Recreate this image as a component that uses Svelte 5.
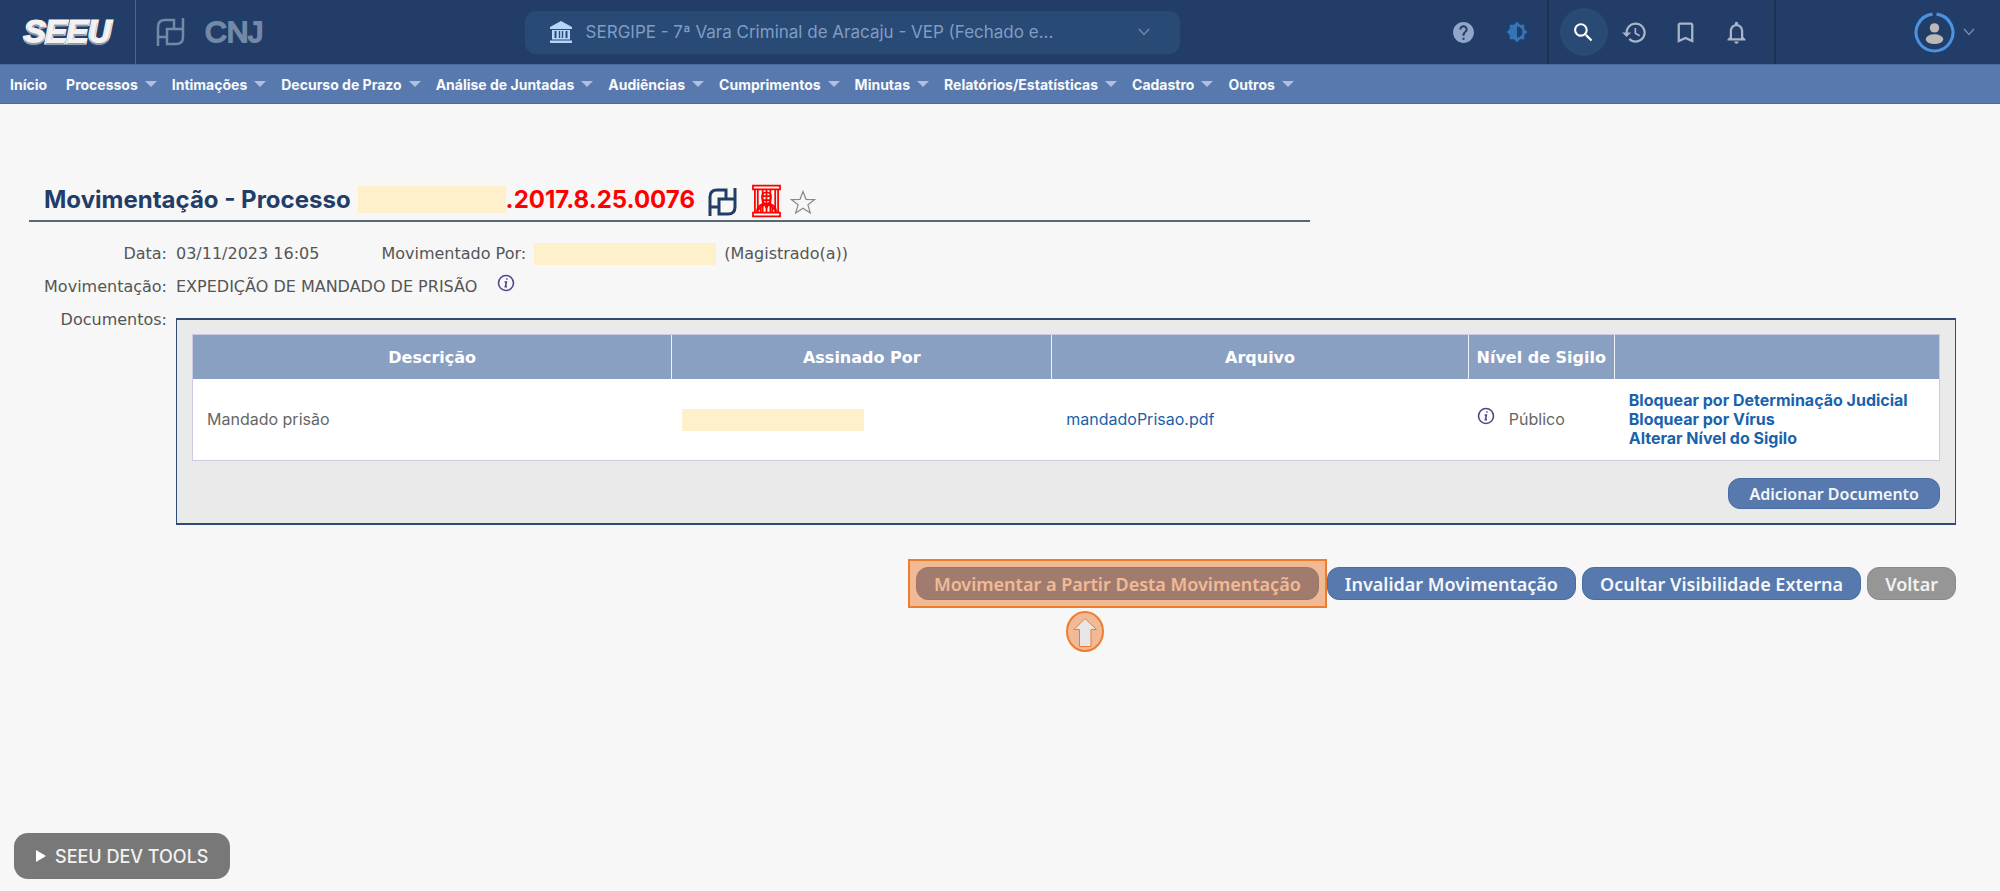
<script>
  const menu = [
    { label: 'Início', sub: false },
    { label: 'Processos', sub: true },
    { label: 'Intimações', sub: true },
    { label: 'Decurso de Prazo', sub: true },
    { label: 'Análise de Juntadas', sub: true },
    { label: 'Audiências', sub: true },
    { label: 'Cumprimentos', sub: true },
    { label: 'Minutas', sub: true },
    { label: 'Relatórios/Estatísticas', sub: true },
    { label: 'Cadastro', sub: true },
    { label: 'Outros', sub: true }
  ];

  const acoes = [
    'Bloquear por Determinação Judicial',
    'Bloquear por Vírus',
    'Alterar Nível do Sigilo'
  ];
</script>

{#snippet pdpj()}
  <svg class="pdpj" viewBox="0 0 29 28" aria-hidden="true">
    <path d="M2 28V9Q2 2 9 2H18V10M27 0V19Q27 26 20 26H11V11H27M2 19H11" />
  </svg>
{/snippet}

{#snippet info()}
  <svg class="info" viewBox="0 0 18 18" aria-hidden="true">
    <circle cx="9" cy="9" r="7.5" />
    <path d="M10 4.4L9.8 5.6M7.6 8H9.4L8.4 12.6H10" />
  </svg>
{/snippet}

<div class="page">
  <header class="topbar">
    <div class="brand">
      <a href="#inicio" class="seeu">SEEU</a>
      <a href="#pdpj" class="cnj" aria-label="CNJ">
        {@render pdpj()}
        <span>CNJ</span>
      </a>
    </div>

    <label class="vara">
      <svg class="bank" viewBox="0 0 22 22" aria-hidden="true">
        <path d="M11 0L22 6V8H0V6ZM2 9H20V17H17.5V10H15.5V17H13.2V10H11.8V17H10.2V10H8.8V17H6.5V10H4.5V17H2ZM2 17H20V18.5H2ZM0 19.5H22V22H0Z" />
      </svg>
      <select aria-label="Vara">
        <option>SERGIPE - 7ª Vara Criminal de Aracaju - VEP (Fechado e...</option>
      </select>
      <svg class="chevron" viewBox="0 0 12 8" aria-hidden="true"><path d="M1 1L6 6.5L11 1" /></svg>
    </label>

    <div class="tools">
      <div class="group prefs">
        <button type="button" aria-label="Ajuda">
          <svg viewBox="0 0 24 24" class="help"><path d="M12 2C6.48 2 2 6.48 2 12s4.48 10 10 10 10-4.48 10-10S17.52 2 12 2zm1 17h-2v-2h2v2zm2.07-7.75l-.9.92C13.45 12.9 13 13.5 13 15h-2v-.5c0-1.1.45-2.1 1.17-2.83l1.24-1.26c.37-.36.59-.86.59-1.41 0-1.1-.9-2-2-2s-2 .9-2 2H8c0-2.21 1.79-4 4-4s4 1.79 4 4c0 .88-.36 1.68-.93 2.25z" /></svg>
        </button>
        <button type="button" aria-label="Contraste">
          <svg viewBox="0 0 24 24" class="contrast"><path d="M20 15.31L23.31 12 20 8.69V4h-4.69L12 .69 8.69 4H4v4.69L.69 12 4 15.31V20h4.69L12 23.31 15.31 20H20v-4.69zM12 18V6c3.31 0 6 2.69 6 6s-2.69 6-6 6z" /></svg>
        </button>
      </div>
      <div class="group shortcuts">
        <button type="button" class="search" aria-label="Pesquisar">
          <svg viewBox="0 0 24 24"><path d="M15.5 14h-.79l-.28-.27C15.41 12.59 16 11.11 16 9.5 16 5.91 13.09 3 9.5 3S3 5.91 3 9.5 5.91 16 9.5 16c1.61 0 3.09-.59 4.23-1.57l.27.28v.79l5 4.99L20.49 19l-4.99-5zm-6 0C7.01 14 5 11.99 5 9.5S7.01 5 9.5 5 14 7.01 14 9.5 11.99 14 9.5 14z" /></svg>
        </button>
        <button type="button" aria-label="Histórico">
          <svg viewBox="0 0 24 24"><path d="M13 3c-4.97 0-9 4.03-9 9H1l3.89 3.89.07.14L9 12H6c0-3.87 3.13-7 7-7s7 3.13 7 7-3.13 7-7 7c-1.93 0-3.68-.79-4.94-2.06l-1.42 1.42C8.27 19.99 10.51 21 13 21c4.97 0 9-4.03 9-9s-4.03-9-9-9zm-1 5v5l4.28 2.54.72-1.21-3.5-2.08V8H12z" /></svg>
        </button>
        <button type="button" aria-label="Favoritos">
          <svg viewBox="0 0 24 24"><path d="M17 3H7c-1.1 0-2 .9-2 2v16l7-3 7 3V5c0-1.1-.9-2-2-2zm0 15l-5-2.18L7 18V5h10v13z" /></svg>
        </button>
        <button type="button" aria-label="Notificações">
          <svg viewBox="0 0 24 24"><path d="M12 22c1.1 0 2-.9 2-2h-4c0 1.1.9 2 2 2zm6-6v-5c0-3.07-1.63-5.64-4.5-6.32V4c0-.83-.67-1.5-1.5-1.5s-1.500.67-1.500 1.500v.68C7.640 5.360 6 7.920 6 11v5l-2 2v1h16v-1l-2-2zm-2 1H8v-6c0-2.480 1.510-4.500 4-4.500s4 2.020 4 4.500v6z" /></svg>
        </button>
      </div>
      <button type="button" class="user" aria-label="Usuário">
        <svg class="avatar" viewBox="0 0 40 40">
          <path class="ring" d="M22 2.1A18 18 0 1 1 18 2.1" />
          <circle cx="20" cy="15.5" r="4.6" />
          <ellipse cx="20" cy="26.5" rx="8.5" ry="4.8" />
        </svg>
        <svg class="chevron" viewBox="0 0 12 8"><path d="M1 1L6 6.5L11 1" /></svg>
      </button>
    </div>
  </header>

  <nav class="menu">
    {#each menu as item}
      <a href="#menu" class:sub={item.sub}>{item.label}</a>
    {/each}
  </nav>

  <main>
    <h1>
      <span>Movimentação - Processo</span>
      <span class="tarja numero"></span>
      <span class="processo">.2017.8.25.0076</span>
      {@render pdpj()}
      <svg class="preso" viewBox="0 0 30 34" aria-hidden="true">
        <path d="M1 1H29V5H1ZM1 29H29V33H1ZM3 5V29M6 5V29M11 5V29M15 5V29M19 5V29M24 5V29M27 5V29" />
        <path d="M15 8C11 8 10 11 10.5 14C11 18 13 20 15 20C17 20 19 18 19.5 14C20 11 19 8 15 8ZM10.5 12H19.5M11 16H19M12 19L15 24L18 19M5 29C5 24 7 21 12 20M25 29C25 24 23 21 18 20M9 24V29M21 24V29M5 27L12 21M25 27L18 21" />
      </svg>
      <svg class="estrela" viewBox="0 0 26 24" aria-hidden="true">
        <path d="M13 1.5L16 9.3L24.5 9.6L17.9 14.8L20.3 23L13 18.2L5.7 23L8.1 14.8L1.5 9.6L10 9.3Z" />
      </svg>
    </h1>

    <dl class="dados">
      <dt>Data:</dt>
      <dd class="linha">
        <span>03/11/2023 16:05</span>
        <span class="autor">
          <span>Movimentado Por:</span>
          <span class="tarja nome"></span>
          <span>(Magistrado(a))</span>
        </span>
      </dd>

      <dt>Movimentação:</dt>
      <dd class="tipo">EXPEDIÇÃO DE MANDADO DE PRISÃO {@render info()}</dd>

      <dt>Documentos:</dt>
      <dd class="documentos">
        <table>
          <thead>
            <tr>
              <th class="c-descricao">Descrição</th>
              <th class="c-assinado">Assinado Por</th>
              <th class="c-arquivo">Arquivo</th>
              <th class="c-sigilo">Nível de Sigilo</th>
              <th></th>
            </tr>
          </thead>
          <tbody>
            <tr>
              <td>Mandado prisão</td>
              <td class="assinado"><span class="tarja nome"></span></td>
              <td><a href="#arquivo">mandadoPrisao.pdf</a></td>
              <td class="sigilo"><span>{@render info()} Público</span></td>
              <td class="acoes">
                {#each acoes as acao}
                  <a href="#acao">{acao}</a>
                {/each}
              </td>
            </tr>
          </tbody>
        </table>
        <button type="button" class="btn small">Adicionar Documento</button>
      </dd>
    </dl>

    <div class="botoes">
      <div class="destaque">
        <button type="button" class="btn">Movimentar a Partir Desta Movimentação</button>
        <div class="moldura"></div>
        <svg class="seta" viewBox="0 0 38 41" aria-hidden="true">
          <ellipse cx="19" cy="20.5" rx="18" ry="19.5" />
          <path d="M19 7.5L30.5 18.5H25V35.5H13.5V18.5H8Z" />
        </svg>
      </div>
      <button type="button" class="btn">Invalidar Movimentação</button>
      <button type="button" class="btn">Ocultar Visibilidade Externa</button>
      <button type="button" class="btn voltar">Voltar</button>
    </div>
  </main>

  <footer>
    <button type="button" class="devtools">
      <svg viewBox="0 0 10 12" aria-hidden="true"><path d="M0 0L10 6L0 12Z" /></svg>
      SEEU DEV TOOLS
    </button>
  </footer>
</div>

<style>
  :global(body) {
    margin: 0;
    background: #f7f7f7;
  }

  .page {
    display: flex;
    flex-direction: column;
    min-height: 100vh;
    font-family: Inter, sans-serif;
    font-size: 16px;
    color: #555;
  }

  a {
    color: #1a62ac;
    text-decoration: none;
  }

  button {
    font-family: inherit;
    border: none;
    cursor: pointer;
  }

  /* barra superior */
  .topbar {
    display: grid;
    grid-template-columns: minmax(0, 16fr) minmax(0, 20fr) minmax(0, 25fr);
    align-items: center;
    height: 64px;
    background: #223d67;
  }

  .brand {
    display: flex;
    align-self: stretch;
  }

  .seeu {
    display: flex;
    align-items: center;
    justify-content: center;
    width: 135px;
    border-right: 1px solid #4c6488;
    color: #f2f2f2;
    font: italic 700 32px "Liberation Sans", sans-serif;
    -webkit-text-stroke: 3px #f2f2f2;
    paint-order: stroke;
    text-shadow: 0 2px 1px #8d98ab;
  }

  .cnj {
    display: flex;
    align-items: center;
    gap: 20px;
    padding-left: 20px;
    color: #7389a8;
    font: 400 30px "Liberation Sans", sans-serif;
    -webkit-text-stroke: 2px #7389a8;
  }

  .pdpj {
    width: 29px;
    height: 28px;
    fill: none;
    stroke: #223d67;
    stroke-width: 3;
  }

  .cnj .pdpj {
    stroke: #7389a8;
    stroke-width: 2.5;
  }

  .vara {
    display: flex;
    align-items: center;
    gap: 14px;
    height: 43px;
    padding: 0 30px 0 25px;
    border-radius: 11px;
    background: #294a74;
  }

  .bank {
    width: 22px;
    height: 22px;
    fill: #b5d6f8;
  }

  .vara select {
    flex: 1;
    min-width: 0;
    padding: 0;
    border: none;
    appearance: none;
    background: transparent;
    color: #7f9dc4;
    font: 400 17px Inter, sans-serif;
  }

  .chevron {
    width: 12px;
    height: 8px;
    fill: none;
    stroke: #7089ae;
    stroke-width: 1.5;
  }

  .tools {
    display: flex;
    align-self: stretch;
    justify-content: flex-end;
  }

  .group {
    display: flex;
    align-items: center;
    gap: 3px;
    border-right: 2px solid #1b3154;
  }

  .prefs {
    gap: 5px;
    padding-right: 6px;
  }

  .shortcuts {
    padding: 0 13px 0 11px;
  }

  .group button {
    display: flex;
    align-items: center;
    justify-content: center;
    width: 48px;
    height: 48px;
    padding: 0;
    border-radius: 50%;
    background: transparent;
  }

  .group svg {
    width: 27px;
    height: 27px;
    fill: #a9b5c8;
  }

  .group .help {
    fill: #8fa6c8;
    width: 25px;
    height: 25px;
  }

  .group .contrast {
    width: 22px;
    height: 22px;
    fill: #3474b8;
  }

  .group .search {
    background: #294a74;
  }

  .group .search svg {
    width: 25px;
    height: 25px;
    fill: #fff;
  }

  .user {
    display: flex;
    align-items: center;
    justify-content: flex-end;
    gap: 8px;
    width: 224px;
    padding: 0 25px 0 0;
    background: transparent;
  }

  .avatar {
    width: 41px;
    height: 41px;
    fill: #bcb8b6;
  }

  .ring {
    fill: none;
    stroke: #4a92e2;
    stroke-width: 3;
  }

  /* menu */
  .menu {
    display: flex;
    align-items: center;
    gap: 15px;
    height: 38px;
    padding-left: 10px;
    border-top: 1px solid #4b6b9d;
    border-bottom: 1px solid #4b6b9d;
    background: #5879ad;
  }

  .menu a {
    display: flex;
    align-items: center;
    gap: 7px;
    color: #f8f9fc;
    font-size: 14px;
    font-weight: 700;
    white-space: nowrap;
  }

  .menu a:first-child {
    margin-right: 4px;
  }

  .menu .sub::after {
    content: '';
    border: 6px solid transparent;
    border-top-color: #b0c0da;
    border-bottom: none;
  }

  /* conteúdo */
  main {
    padding: 75px 44px 0 29px;
  }

  h1 {
    display: flex;
    align-items: center;
    box-sizing: border-box;
    width: 66.5%;
    height: 43px;
    margin: 0;
    padding-left: 15px;
    border-bottom: 2px solid #566871;
    color: #223d67;
    font-size: 24px;
    white-space: nowrap;
  }

  .processo {
    color: #f00;
  }

  .tarja {
    display: inline-block;
    background: #fff0cc;
  }

  .numero {
    width: 148px;
    height: 27px;
    margin-left: 7px;
  }

  .nome {
    width: 182px;
    height: 22px;
  }

  h1 .pdpj {
    margin: 4px 15px 0 13px;
  }

  .preso {
    width: 29px;
    height: 34px;
    margin: 2px 9px 0 0;
    fill: none;
    stroke: #f00;
    stroke-width: 1.8;
  }

  .estrela {
    width: 26px;
    height: 24px;
    margin-top: 4px;
    fill: none;
    stroke: #888;
    stroke-width: 1.2;
  }

  .dados {
    display: grid;
    grid-template-columns: 138px minmax(0, 1fr);
    column-gap: 9px;
    margin: 0;
    padding-top: 15px;
    font-family: "DejaVu Sans", Verdana, sans-serif;
    line-height: 33px;
  }

  dt {
    text-align: right;
  }

  dd {
    margin: 0;
  }

  .linha {
    display: flex;
    gap: 62px;
  }

  .autor {
    display: flex;
    align-items: center;
    gap: 8px;
  }

  .tipo {
    display: flex;
    align-items: center;
    gap: 20px;
  }

  .info {
    flex: none;
    width: 18px;
    height: 18px;
    margin-bottom: 8px;
    fill: none;
    stroke: #54468c;
    stroke-width: 1.6;
  }

  .documentos {
    display: flex;
    flex-direction: column;
    align-items: flex-end;
    gap: 17px;
    margin-top: 15px;
    padding: 14px 15px;
    border: 1px solid #304b78;
    border-width: 2px 1px;
    background: #eaeaea;
  }

  table {
    width: 100%;
    table-layout: fixed;
    border: 1px solid #cdcae3;
    border-spacing: 0;
    background: #fff;
    font-family: Inter, sans-serif;
    line-height: 19px;
  }

  th {
    height: 44px;
    padding: 0;
    border-right: 1px solid #eef1f7;
    background: #8aa0c3;
    color: #fff;
    font: 700 16px "DejaVu Sans", Verdana, sans-serif;
  }

  th:last-child {
    border-right: none;
  }

  .c-descricao {
    width: 27.4%;
  }

  .c-assinado {
    width: 21.7%;
  }

  .c-arquivo {
    width: 23.8%;
  }

  .c-sigilo {
    width: 8.3%;
  }

  td {
    height: 81px;
    padding: 0 14px;
    color: #666;
  }

  td.assinado {
    padding: 0 10px;
  }

  .assinado .tarja {
    vertical-align: middle;
  }

  td.sigilo {
    padding: 0 8px;
  }

  .sigilo span {
    display: flex;
    align-items: center;
    gap: 14px;
  }

  .acoes a {
    display: block;
    font-weight: 700;
  }

  .btn {
    box-sizing: border-box;
    height: 33px;
    padding: 0 17px;
    border: 1px solid #4a6da3;
    border-radius: 12px;
    background: #5779ad;
    color: #f5f7fb;
    font: 600 18px "Noto Sans", sans-serif;
    line-height: 30px;
    white-space: nowrap;
  }

  .small {
    height: 31px;
    padding: 0 20px;
    font-size: 16px;
    line-height: 28px;
  }

  .voltar {
    border-color: #8a8a8a;
    background: #969696;
    color: #f2f2f2;
  }

  .botoes {
    display: flex;
    flex-wrap: wrap;
    justify-content: flex-end;
    gap: 6px;
    margin-top: 42px;
  }

  .destaque {
    position: relative;
    margin-right: 2px;
  }

  .moldura {
    position: absolute;
    inset: -8px;
    border: 2px solid #ed7d31;
    background: rgba(237, 125, 49, 0.5);
    pointer-events: none;
  }

  .seta {
    position: absolute;
    top: 44px;
    left: 150px;
    width: 38px;
    height: 41px;
    stroke: #ed7d31;
    stroke-width: 2;
    fill: #f2b997;
  }

  .seta path {
    fill: #e7e6e6;
    stroke-width: 1;
  }

  footer {
    margin-top: auto;
    padding: 60px 14px 12px;
  }

  .devtools {
    display: flex;
    align-items: center;
    gap: 9px;
    height: 46px;
    padding: 0 22px;
    border-radius: 14px;
    background: #787878;
    color: #f2f2f2;
    font-size: 18px;
    font-weight: 500;
  }

  .devtools svg {
    width: 10px;
    height: 12px;
    fill: #fff;
  }
</style>
